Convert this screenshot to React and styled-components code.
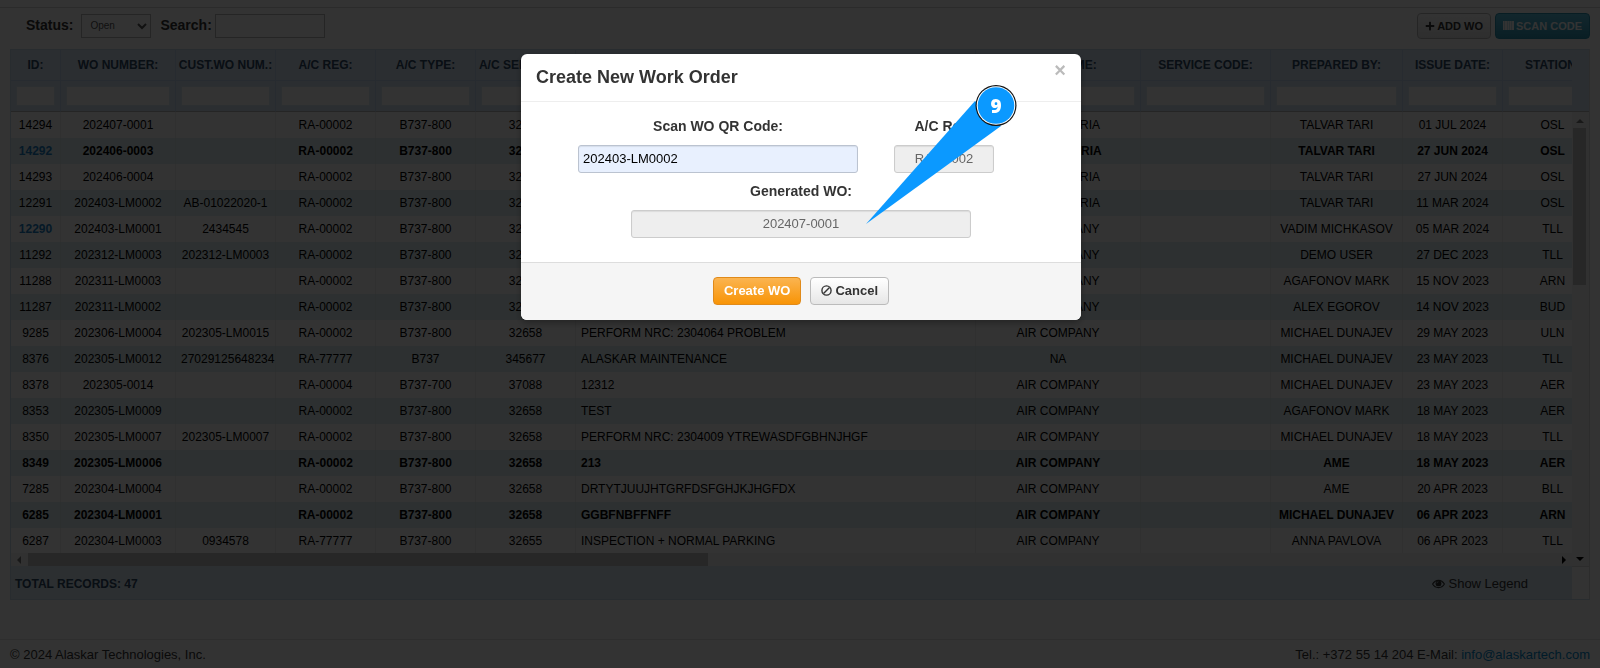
import { createGlobalStyle, styled } from 'styled-components'
import { FaPlus } from 'react-icons/fa'

const columns = [
  { key: 'id', title: 'ID:', width: 50 },
  { key: 'number', title: 'WO NUMBER:', width: 115 },
  { key: 'custom', title: 'CUST.WO NUM.:', width: 100 },
  { key: 'reg', title: 'A/C REG:', width: 100 },
  { key: 'type', title: 'A/C TYPE:', width: 100 },
  { key: 'serial', title: 'A/C SERIAL NO:', width: 100 },
  { key: 'description', title: 'DESCRIPTION:', width: 400, left: true },
  { key: 'company', title: 'CUST. NAME:', width: 165 },
  { key: 'service', title: 'SERVICE CODE:', width: 130 },
  { key: 'author', title: 'PREPARED BY:', width: 132 },
  { key: 'date', title: 'ISSUE DATE:', width: 100 },
  { key: 'station', title: 'STATION:', width: 100 },
]

const rows = [
  ['14294', '202407-0001', '', 'RA-00002', 'B737-800', '32658', '', 'AIR BULGARIA', '', 'TALVAR TARI', '01 JUL 2024', 'OSL'],
  ['14292', '202406-0003', '', 'RA-00002', 'B737-800', '32658', '', 'AIR BULGARIA', '', 'TALVAR TARI', '27 JUN 2024', 'OSL'],
  ['14293', '202406-0004', '', 'RA-00002', 'B737-800', '32658', '', 'AIR BULGARIA', '', 'TALVAR TARI', '27 JUN 2024', 'OSL'],
  ['12291', '202403-LM0002', 'AB-01022020-1', 'RA-00002', 'B737-800', '32658', '', 'AIR BULGARIA', '', 'TALVAR TARI', '11 MAR 2024', 'OSL'],
  ['12290', '202403-LM0001', '2434545', 'RA-00002', 'B737-800', '32658', '', 'AIR COMPANY', '', 'VADIM MICHKASOV', '05 MAR 2024', 'TLL'],
  ['11292', '202312-LM0003', '202312-LM0003', 'RA-00002', 'B737-800', '32658', '', 'AIR COMPANY', '', 'DEMO USER', '27 DEC 2023', 'TLL'],
  ['11288', '202311-LM0003', '', 'RA-00002', 'B737-800', '32658', '', 'AIR COMPANY', '', 'AGAFONOV MARK', '15 NOV 2023', 'ARN'],
  ['11287', '202311-LM0002', '', 'RA-00002', 'B737-800', '32658', '', 'AIR COMPANY', '', 'ALEX EGOROV', '14 NOV 2023', 'BUD'],
  ['9285', '202306-LM0004', '202305-LM0015', 'RA-00002', 'B737-800', '32658', 'PERFORM NRC: 2304064 PROBLEM', 'AIR COMPANY', '', 'MICHAEL DUNAJEV', '29 MAY 2023', 'ULN'],
  ['8376', '202305-LM0012', '27029125648234', 'RA-77777', 'B737', '345677', 'ALASKAR MAINTENANCE', 'NA', '', 'MICHAEL DUNAJEV', '23 MAY 2023', 'TLL'],
  ['8378', '202305-0014', '', 'RA-00004', 'B737-700', '37088', '12312', 'AIR COMPANY', '', 'MICHAEL DUNAJEV', '23 MAY 2023', 'AER'],
  ['8353', '202305-LM0009', '', 'RA-00002', 'B737-800', '32658', 'TEST', 'AIR COMPANY', '', 'AGAFONOV MARK', '18 MAY 2023', 'AER'],
  ['8350', '202305-LM0007', '202305-LM0007', 'RA-00002', 'B737-800', '32658', 'PERFORM NRC: 2304009 YTREWASDFGBHNJHGF', 'AIR COMPANY', '', 'MICHAEL DUNAJEV', '18 MAY 2023', 'TLL'],
  ['8349', '202305-LM0006', '', 'RA-00002', 'B737-800', '32658', '213', 'AIR COMPANY', '', 'AME', '18 MAY 2023', 'AER'],
  ['7285', '202304-LM0004', '', 'RA-00002', 'B737-800', '32658', 'DRTYTJUUJHTGRFDSFGHJKJHGFDX', 'AIR COMPANY', '', 'AME', '20 APR 2023', 'BLL'],
  ['6285', '202304-LM0001', '', 'RA-00002', 'B737-800', '32658', 'GGBFNBFFNFF', 'AIR COMPANY', '', 'MICHAEL DUNAJEV', '06 APR 2023', 'ARN'],
  ['6287', '202304-LM0003', '0934578', 'RA-77777', 'B737-800', '32655', 'INSPECTION + NORMAL PARKING', 'AIR COMPANY', '', 'ANNA PAVLOVA', '06 APR 2023', 'TLL'],
]

const boldRows = ['14292', '8349', '6285']
const linkedRows = ['14292', '12290']

function App() {
  return (
    <>
      <GlobalStyle />
      <Page>
        <Toolbar>
          <ToolbarLabel htmlFor="status">Status:</ToolbarLabel>
          <StatusSelect id="status" defaultValue="Open">
            <option>Open</option>
            <option>Closed</option>
          </StatusSelect>
          <ToolbarLabel htmlFor="search">Search:</ToolbarLabel>
          <SearchInput id="search" type="text" />
          <ToolbarActions>
            <SmallButton type="button">
              <FaPlus size={10} /> ADD WO
            </SmallButton>
            <SmallButton type="button" $info>
              <ScanIcon /> SCAN CODE
            </SmallButton>
          </ToolbarActions>
        </Toolbar>
        <WorkOrders />
        <PageFooter>
          <span>© 2024 Alaskar Technologies, Inc.</span>
          <span>
            Tel.: +372 55 14 204 E-Mail:{' '}
            <a href="mailto:info@alaskartech.com">info@alaskartech.com</a>
          </span>
        </PageFooter>
      </Page>
      <Backdrop>
        <CreateDialog />
      </Backdrop>
    </>
  )
}

function WorkOrders() {
  return (
    <Panel>
      <PanelMain>
        <Viewport>
          <Table>
            <colgroup>
              {columns.map(column => (
                <Column key={column.key} $width={column.width} />
              ))}
            </colgroup>
            <thead>
              <tr>
                {columns.map(column => (
                  <HeadCell key={column.key}>{column.title}</HeadCell>
                ))}
              </tr>
              <tr>
                {columns.map(column => (
                  <FilterCell key={column.key}>
                    <FilterInput type="text" aria-label={column.title} />
                  </FilterCell>
                ))}
              </tr>
            </thead>
            <tbody>
              {rows.map(row => (
                <Row key={row[0]} $bold={boldRows.includes(row[0])}>
                  {row.map((value, index) => (
                    <Cell key={columns[index].key} $left={columns[index].left}>
                      {index === 0 && linkedRows.includes(value) ? (
                        <RowLink href="#">{value}</RowLink>
                      ) : (
                        value
                      )}
                    </Cell>
                  ))}
                </Row>
              ))}
            </tbody>
          </Table>
        </Viewport>
        <HorizontalScroll>
          <Arrow viewBox="0 0 10 10">
            <path d="M7 1v8L3 5z" fill="#7a7a7a" />
          </Arrow>
          <HorizontalTrack>
            <HorizontalThumb />
          </HorizontalTrack>
          <Arrow viewBox="0 0 10 10">
            <path d="M3 1v8l4-4z" />
          </Arrow>
        </HorizontalScroll>
        <Summary>
          <strong>TOTAL RECORDS: 47</strong>
          <LegendButton type="button">
            <EyeIcon /> Show Legend
          </LegendButton>
        </Summary>
      </PanelMain>
      <PanelSide>
        <SideHead />
        <VerticalScroll>
          <Arrow viewBox="0 0 10 10">
            <path d="M1 7h8L5 3z" fill="#7a7a7a" />
          </Arrow>
          <VerticalThumb />
          <Arrow viewBox="0 0 10 10">
            <path d="M1 3h8L5 7z" />
          </Arrow>
        </VerticalScroll>
        <SideFoot />
      </PanelSide>
    </Panel>
  )
}

function CreateDialog() {
  return (
    <Dialog role="dialog" aria-labelledby="dialog-title">
      <DialogHeader>
        <DialogTitle id="dialog-title">Create New Work Order</DialogTitle>
        <CloseButton type="button" aria-label="Close">
          ×
        </CloseButton>
      </DialogHeader>
      <DialogBody>
        <FieldRow>
          <Field $width={280}>
            <label htmlFor="qr">Scan WO QR Code:</label>
            <FieldInput id="qr" type="text" defaultValue="202403-LM0002" />
          </Field>
          <Field $width={100}>
            <label htmlFor="reg">A/C Reg:</label>
            <FieldInput id="reg" type="text" defaultValue="RA-00002" disabled />
          </Field>
        </FieldRow>
        <Field $width={340}>
          <label htmlFor="generated">Generated WO:</label>
          <FieldInput
            id="generated"
            type="text"
            defaultValue="202407-0001"
            disabled
          />
        </Field>
      </DialogBody>
      <DialogFooter>
        <DialogButton type="button" $warning>
          Create WO
        </DialogButton>
        <DialogButton type="button">
          <BanIcon /> Cancel
        </DialogButton>
      </DialogFooter>
      <Callout width="152" height="144" viewBox="0 0 152 144">
        <path d="M110 18 L136 43 L1 141 Z" fill="#0b99ff" />
        <circle cx="131" cy="22.500" r="20.500" fill="#111" />
        <circle cx="131" cy="22.500" r="19.300" fill="#fff" />
        <circle cx="131" cy="22.500" r="18.300" fill="#0b99ff" />
        <text x="131" y="30" textAnchor="middle">
          9
        </text>
      </Callout>
    </Dialog>
  )
}

function ScanIcon() {
  return (
    <svg width="11" height="9" viewBox="0 0 11 9" fill="currentColor">
      <path d="M0 0h1v9H0zM2 0h2v9H2zM5 0h1v9H5zM7 0h1v9H7zM9 0h2v9H9z" />
      <path d="M0 0h11v9H0z" opacity="0.7" />
    </svg>
  )
}

function BanIcon() {
  return (
    <svg width="11" height="11" viewBox="0 0 12 12" fill="none">
      <circle cx="6" cy="6" r="5" stroke="currentColor" strokeWidth="1.5" />
      <path d="M9.3 2.7 2.7 9.3" stroke="currentColor" strokeWidth="1.5" />
    </svg>
  )
}

function EyeIcon() {
  return (
    <svg width="13" height="10" viewBox="0 0 13 10" fill="none">
      <path
        d="M.6 5C2 2.7 4 1.4 6.5 1.4S11 2.7 12.4 5C11 7.3 9 8.6 6.5 8.6S2 7.3.6 5z"
        stroke="currentColor"
        strokeWidth="1.1"
      />
      <circle cx="6.5" cy="4.4" r="2.9" fill="currentColor" />
      <path d="M4.9 4.3a1.6 1.6 0 0 1 1.6-1.6" stroke="#d9e8f2" strokeWidth=".6" />
    </svg>
  )
}

const GlobalStyle = createGlobalStyle`
  * {
    box-sizing: border-box;
  }

  body {
    margin: 0;
    background: white;
    color: #333;
    font: 13px/20px 'Liberation Sans', Arial, sans-serif;
  }

  input, select, button {
    font-family: inherit;
  }
`

const Page = styled.main`
  margin-top: 7px;
  border-top: 1px solid #d4d4d4;
`

const Toolbar = styled.div`
  display: flex;
  align-items: center;
  height: 41px;
  padding: 0 10px 6px 26px;
`

const ToolbarLabel = styled.label`
  padding-bottom: 2px;
  font-size: 14px;
  font-weight: bold;
`

const StatusSelect = styled.select`
  width: 70px;
  height: 24px;
  margin: 0 9px 0 8px;
  padding: 0 4px;
  border: 1px solid #bbb;
  background: white;
  color: #555;
  font-size: 10px;
`

const SearchInput = styled.input`
  width: 110px;
  height: 24px;
  margin-left: 3px;
  border: 1px solid #bbb;
`

const ToolbarActions = styled.div`
  display: flex;
  gap: 4px;
  margin-left: auto;
`

const SmallButton = styled.button`
  display: flex;
  align-items: center;
  gap: 2px;
  height: 26px;
  padding: 0 7px;
  border: 1px solid ${props => (props.$info ? '#2a8fae' : '#bbb')};
  border-radius: 4px;
  background: ${props =>
    props.$info
      ? 'linear-gradient(#5bc0de, #2f96b4)'
      : 'linear-gradient(white, #e6e6e6)'};
  color: ${props => (props.$info ? 'white' : '#333')};
  font-size: 11px;
  font-weight: bold;
`

const Panel = styled.section`
  display: flex;
  margin: 0 10px;
  border: 1px solid #c6d9ea;
  border-right-color: #ddd;
`

const PanelMain = styled.div`
  flex: 1;
  min-width: 0;
`

const Viewport = styled.div`
  height: 503px;
  overflow: hidden;
`

const Table = styled.table`
  width: 1592px;
  table-layout: fixed;
  border-collapse: separate;
  border-spacing: 0;
  color: black;
  font-size: 12px;
`

const Column = styled.col`
  width: ${props => props.$width}px;
`

const HeadCell = styled.th`
  height: 31px;
  padding: 0;
  border-right: 1px solid #c1d8ee;
  border-bottom: 1px solid #c1d8ee;
  background: #d5e5f2;
  color: #2f4a66;
  white-space: nowrap;
`

const FilterCell = styled.td`
  height: 31px;
  padding: 0 5px;
  border-right: 1px solid #c1d8ee;
  border-bottom: 1px solid #bbb;
  background: #d5e5f2;
`

const FilterInput = styled.input`
  display: block;
  width: 100%;
  height: 20px;
  border: 1px solid #dde8f2;
  background: white;
`

const Cell = styled.td`
  height: 26px;
  padding: 0 5px;
  border-right: 1px solid #efefef;
  text-align: ${props => (props.$left ? 'left' : 'center')};
  white-space: nowrap;
`

const Row = styled.tr`
  font-weight: ${props => (props.$bold ? 'bold' : 'normal')};

  &:nth-child(even) {
    background: #e1f0f2;
  }

  &:nth-child(even) ${Cell} {
    border-color: #dbeaec;
  }
`

const RowLink = styled.a`
  color: #1a7fc4;
  font-weight: bold;
  text-decoration: none;
`

const HorizontalScroll = styled.div`
  display: flex;
  align-items: center;
  height: 13px;
  background: #f5f5f5;
`

const Arrow = styled.svg`
  flex: none;
  width: 10px;
  height: 10px;
  margin: 0 3px;
`

const HorizontalTrack = styled.div`
  flex: 1;
  height: 13px;
  padding-left: 1px;
`

const HorizontalThumb = styled.div`
  width: 44.5%;
  height: 100%;
  background: #c1c1c1;
`

const Summary = styled.div`
  display: flex;
  align-items: center;
  justify-content: space-between;
  height: 33px;
  padding: 2px 44px 0 4px;
  background: #d9e8f2;
  color: #2f4a66;
  font-size: 12px;
`

const LegendButton = styled.button`
  display: flex;
  align-items: center;
  gap: 3px;
  padding: 0;
  border: 0;
  background: none;
  color: #333;
  font-size: 13px;
`

const PanelSide = styled.div`
  display: flex;
  flex-direction: column;
  width: 17px;
`

const SideHead = styled.div`
  height: 62px;
  border-bottom: 1px solid #bbb;
  background: #d5e5f2;
`

const VerticalScroll = styled.div`
  display: flex;
  flex: 1;
  flex-direction: column;
  justify-content: space-between;
  padding: 4px 0 2px;
  background: #f5f5f5;
`

const VerticalThumb = styled.div`
  width: 13px;
  height: 157px;
  margin: 2px 0 auto 1px;
  background: #c1c1c1;
`

const SideFoot = styled.div`
  height: 33px;
  border-top: 1px solid #ddd;
`

const PageFooter = styled.footer`
  display: flex;
  justify-content: space-between;
  margin-top: 39px;
  padding: 5px 10px 3px;
  border-top: 1px solid #e5e5e5;

  a {
    color: #0088cc;
    text-decoration: none;
  }
`

const Backdrop = styled.div`
  position: fixed;
  inset: 0;
  display: flex;
  align-items: flex-start;
  justify-content: center;
  padding: 54px 0 0 2px;
  background: rgba(0, 0, 0, 0.8);
`

const Dialog = styled.div`
  position: relative;
  width: 560px;
  border-radius: 6px;
  background: white;
  box-shadow: 0 3px 7px rgba(0, 0, 0, 0.3);
`

const DialogHeader = styled.header`
  display: flex;
  align-items: flex-start;
  justify-content: space-between;
  padding: 8px 15px 9px;
  border-bottom: 1px solid #eee;
`

const DialogTitle = styled.h3`
  margin: 0;
  font-size: 18px;
  line-height: 30px;
`

const CloseButton = styled.button`
  padding: 0;
  border: 0;
  background: none;
  color: #bbb;
  font-size: 20px;
  font-weight: bold;
  line-height: 16px;
`

const DialogBody = styled.div`
  display: flex;
  flex-direction: column;
  align-items: center;
  gap: 8px;
  padding: 14px 15px 24px;
`

const FieldRow = styled.div`
  display: flex;
  gap: 36px;
  padding-right: 30px;
`

const Field = styled.div`
  display: flex;
  flex-direction: column;
  gap: 9px;
  width: ${props => props.$width}px;
  font-size: 14px;
  font-weight: bold;
  text-align: center;
`

const FieldInput = styled.input`
  width: 100%;
  height: 28px;
  padding: 0 4px 2px;
  border: 1px solid #bbc3d0;
  border-radius: 3px;
  background: #e8f0fe;
  box-shadow: inset 0 1px 1px rgba(0, 0, 0, 0.08);
  color: black;
  font-size: 13px;

  &:disabled {
    border-color: #ccc;
    background: #eee;
    color: #666;
    text-align: center;
  }
`

const DialogFooter = styled.footer`
  display: flex;
  justify-content: center;
  gap: 9px;
  padding: 14px 15px 15px;
  border-top: 1px solid #ddd;
  border-radius: 0 0 6px 6px;
  background: #f5f5f5;
`

const DialogButton = styled.button`
  display: flex;
  align-items: center;
  gap: 3px;
  height: 28px;
  padding: 0 10px 2px;
  border: 1px solid ${props => (props.$warning ? '#e08a1a' : '#bbb')};
  border-radius: 4px;
  background: ${props =>
    props.$warning
      ? 'linear-gradient(#fbb450, #f89406)'
      : 'linear-gradient(white, #e6e6e6)'};
  color: ${props => (props.$warning ? 'white' : '#333')};
  font-size: 13px;
  font-weight: bold;
`

const Callout = styled.svg`
  position: absolute;
  top: 29px;
  left: 344px;
  pointer-events: none;

  text {
    fill: white;
    font: 800 19px 'Open Sans', sans-serif;
  }
`

export default App
